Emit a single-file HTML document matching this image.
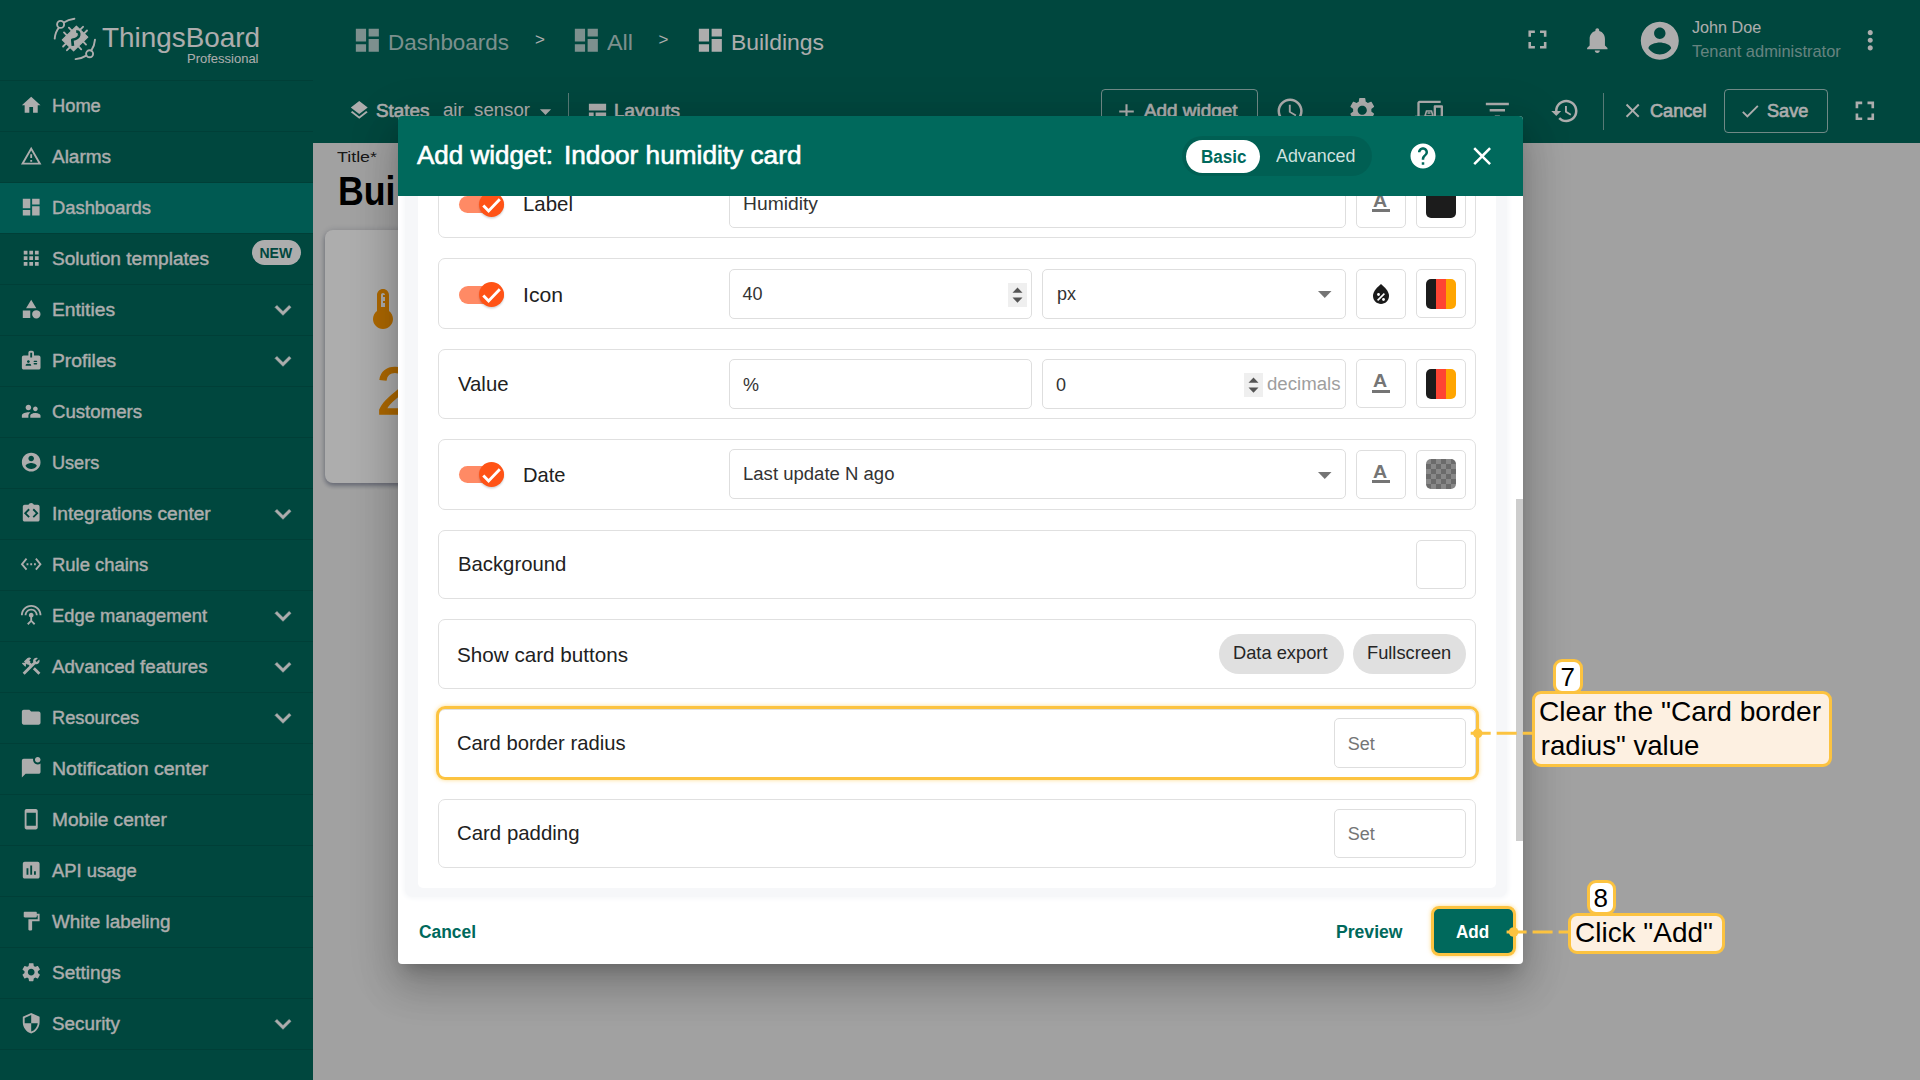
<!DOCTYPE html>
<html><head><meta charset="utf-8"><style>
*{box-sizing:border-box;margin:0;padding:0}
html,body{width:1920px;height:1080px;overflow:hidden;background:#eeeeee;font-family:"Liberation Sans",sans-serif}
.a{position:absolute}
.t{position:absolute;white-space:nowrap;line-height:1}
svg{position:absolute;display:block;overflow:visible}
.med{-webkit-text-stroke:0.35px currentColor}
.med2{-webkit-text-stroke:0.6px currentColor}
.box{position:absolute;border:1px solid #dedede;border-radius:5px;background:#fff}
.row{position:absolute;left:40px;width:1038px;border:1px solid #e0e0e0;border-radius:7px;background:#fff}
</style></head><body>
<div class="a" style="left:0;top:0;width:1920px;height:143px;background:#00695c"></div>
<div class="a" style="left:0;top:0;width:313px;height:1080px;background:#00695c"></div>
<div class="a" style="left:0;top:183px;width:313px;height:50px;background:#00857a"></div>
<div class="a" style="left:0;top:80px;width:313px;height:1px;background:rgba(0,0,0,0.10)"></div>
<svg style="left:20.00px;top:94.20px;width:22.40px;height:22.40px;" viewBox="0 0 24 24"><path fill="#fff" d="M10 20v-6h4v6h5v-8h3L12 3 2 12h3v8z"/></svg>
<div class="t med" style="left:51.90px;top:96.86px;font-size:18px;color:#fff;font-weight:400;;transform:scaleX(1.0163);transform-origin:0 0;">Home</div>
<div class="a" style="left:0;top:131px;width:313px;height:1px;background:rgba(0,0,0,0.10)"></div>
<svg style="left:20.00px;top:145.20px;width:22.40px;height:22.40px;" viewBox="0 0 24 24"><path fill="#fff" d="M12 5.99L19.53 19H4.47L12 5.99M12 2L1 21h22L12 2zm1 14h-2v2h2v-2zm0-6h-2v4h2v-4z"/></svg>
<div class="t med" style="left:51.90px;top:147.86px;font-size:18px;color:#fff;font-weight:400;;transform:scaleX(1.0533);transform-origin:0 0;">Alarms</div>
<div class="a" style="left:0;top:182px;width:313px;height:1px;background:rgba(0,0,0,0.10)"></div>
<svg style="left:20.00px;top:196.20px;width:22.40px;height:22.40px;" viewBox="0 0 24 24"><path fill="#fff" d="M3 13h8V3H3v10zm0 8h8v-6H3v6zm10 0h8V11h-8v10zm0-18v6h8V3h-8z"/></svg>
<div class="t med" style="left:51.90px;top:198.86px;font-size:18px;color:#fff;font-weight:400;;transform:scaleX(1.0200);transform-origin:0 0;">Dashboards</div>
<div class="a" style="left:0;top:233px;width:313px;height:1px;background:rgba(0,0,0,0.10)"></div>
<svg style="left:20.00px;top:247.20px;width:22.40px;height:22.40px;" viewBox="0 0 24 24"><path fill="#fff" d="M4 8h4V4H4v4zm6 12h4v-4h-4v4zm-6 0h4v-4H4v4zm0-6h4v-4H4v4zm6 0h4v-4h-4v4zm6-10v4h4V4h-4zm-6 4h4V4h-4v4zm6 6h4v-4h-4v4zm0 6h4v-4h-4v4z"/></svg>
<div class="t med" style="left:51.90px;top:249.86px;font-size:18px;color:#fff;font-weight:400;;transform:scaleX(1.0601);transform-origin:0 0;">Solution templates</div>
<div class="a" style="left:0;top:284px;width:313px;height:1px;background:rgba(0,0,0,0.10)"></div>
<svg style="left:20.00px;top:298.20px;width:22.40px;height:22.40px;" viewBox="0 0 24 24"><path fill="#fff" d="M12 2l-5.5 9h11zM17.5 13a4.5 4.5 0 1 0 0 9 4.5 4.5 0 1 0 0-9zM3 13.5h8v8H3z"/></svg>
<div class="t med" style="left:51.90px;top:300.86px;font-size:18px;color:#fff;font-weight:400;;transform:scaleX(1.0672);transform-origin:0 0;">Entities</div>
<svg style="left:266.6px;top:293.50px;width:32px;height:32px" viewBox="0 0 24 24"><path fill="#fff" stroke="#fff" stroke-width="0.45" d="M16.59 8.59L12 13.17 7.41 8.59 6 10l6 6 6-6z"/></svg>
<div class="a" style="left:0;top:335px;width:313px;height:1px;background:rgba(0,0,0,0.10)"></div>
<svg style="left:20.00px;top:349.20px;width:22.40px;height:22.40px;" viewBox="0 0 24 24"><path fill="#fff" d="M20 7h-5V4c0-1.1-.9-2-2-2h-2c-1.1 0-2 .9-2 2v3H4c-1.1 0-2 .9-2 2v11c0 1.1.9 2 2 2h16c1.1 0 2-.9 2-2V9c0-1.1-.9-2-2-2zM9 12c.83 0 1.5.67 1.5 1.5S9.83 15 9 15s-1.5-.67-1.5-1.5S8.17 12 9 12zm3 6H6v-.43c0-.6.36-1.15.92-1.39.64-.28 1.34-.43 2.08-.43s1.44.15 2.08.43c.55.24.92.78.92 1.39V18zm1-9h-2V4h2v5zm4.75 7.5h-2.5c-.41 0-.75-.34-.75-.75s.34-.75.75-.75h2.5c.41 0 .75.34.75.75s-.34.75-.75.75zm0-2.5h-2.5c-.41 0-.75-.34-.75-.75s.34-.75.75-.75h2.5c.41 0 .75.34.75.75s-.34.75-.75.75z"/></svg>
<div class="t med" style="left:51.90px;top:351.86px;font-size:18px;color:#fff;font-weight:400;;transform:scaleX(1.0703);transform-origin:0 0;">Profiles</div>
<svg style="left:266.6px;top:344.50px;width:32px;height:32px" viewBox="0 0 24 24"><path fill="#fff" stroke="#fff" stroke-width="0.45" d="M16.59 8.59L12 13.17 7.41 8.59 6 10l6 6 6-6z"/></svg>
<div class="a" style="left:0;top:386px;width:313px;height:1px;background:rgba(0,0,0,0.10)"></div>
<svg style="left:20.00px;top:400.20px;width:22.40px;height:22.40px;" viewBox="0 0 24 24"><path fill="#fff" d="M16.5 12c1.38 0 2.49-1.12 2.49-2.5S17.88 7 16.5 7C15.12 7 14 8.12 14 9.5s1.12 2.5 2.5 2.5zM9 11c1.66 0 2.99-1.34 2.99-3S10.66 5 9 5C7.34 5 6 6.34 6 8s1.34 3 3 3zm7.5 3c-1.83 0-5.5.92-5.5 2.75V19h11v-2.25c0-1.83-3.67-2.75-5.5-2.75zM9 13c-2.33 0-7 1.17-7 3.5V19h7v-2.25c0-.85.33-2.34 2.37-3.47C10.5 13.1 9.66 13 9 13z"/></svg>
<div class="t med" style="left:51.90px;top:402.86px;font-size:18px;color:#fff;font-weight:400;;transform:scaleX(1.0341);transform-origin:0 0;">Customers</div>
<div class="a" style="left:0;top:437px;width:313px;height:1px;background:rgba(0,0,0,0.10)"></div>
<svg style="left:20.00px;top:451.20px;width:22.40px;height:22.40px;" viewBox="0 0 24 24"><path fill="#fff" d="M12 2C6.48 2 2 6.48 2 12s4.48 10 10 10 10-4.48 10-10S17.52 2 12 2zm0 3c1.66 0 3 1.34 3 3s-1.34 3-3 3-3-1.34-3-3 1.34-3 3-3zm0 14.2c-2.5 0-4.71-1.28-6-3.22.03-1.99 4-3.08 6-3.08 1.99 0 5.97 1.09 6 3.08-1.29 1.94-3.5 3.22-6 3.22z"/></svg>
<div class="t med" style="left:51.90px;top:453.86px;font-size:18px;color:#fff;font-weight:400;;transform:scaleX(1.0050);transform-origin:0 0;">Users</div>
<div class="a" style="left:0;top:488px;width:313px;height:1px;background:rgba(0,0,0,0.10)"></div>
<svg style="left:20.00px;top:502.20px;width:22.40px;height:22.40px;" viewBox="0 0 24 24"><path fill="#fff" d="M19 3h-4.18C14.4 1.84 13.3 1 12 1s-2.4.84-2.82 2H5c-1.1 0-2 .9-2 2v14c0 1.1.9 2 2 2h14c1.1 0 2-.9 2-2V5c0-1.1-.9-2-2-2zM10.5 15.5L9.1 16.9 4.2 12l4.9-4.9 1.4 1.4L7 12zM14.9 16.9l-1.4-1.4L17 12l-3.5-3.5 1.4-1.4 4.9 4.9z"/></svg>
<div class="t med" style="left:51.90px;top:504.86px;font-size:18px;color:#fff;font-weight:400;;transform:scaleX(1.0648);transform-origin:0 0;">Integrations center</div>
<svg style="left:266.6px;top:497.50px;width:32px;height:32px" viewBox="0 0 24 24"><path fill="#fff" stroke="#fff" stroke-width="0.45" d="M16.59 8.59L12 13.17 7.41 8.59 6 10l6 6 6-6z"/></svg>
<div class="a" style="left:0;top:539px;width:313px;height:1px;background:rgba(0,0,0,0.10)"></div>
<svg style="left:20.00px;top:553.20px;width:22.40px;height:22.40px;" viewBox="0 0 24 24"><path fill="#fff" d="M7.77 6.76L6.23 5.48.82 12l5.41 6.52 1.54-1.28L3.42 12l4.35-5.24zM7 13h2v-2H7v2zm10-2h-2v2h2v-2zm-6 2h2v-2h-2v2zm6.77-7.52l-1.54 1.28L20.58 12l-4.35 5.24 1.54 1.28L23.18 12l-5.41-6.52z"/></svg>
<div class="t med" style="left:51.90px;top:555.86px;font-size:18px;color:#fff;font-weight:400;;transform:scaleX(1.0233);transform-origin:0 0;">Rule chains</div>
<div class="a" style="left:0;top:590px;width:313px;height:1px;background:rgba(0,0,0,0.10)"></div>
<svg style="left:20.00px;top:604.20px;width:22.40px;height:22.40px;" viewBox="0 0 24 24"><path fill="#fff" d="M12 5c-3.87 0-7 3.13-7 7h2c0-2.76 2.24-5 5-5s5 2.24 5 5h2c0-3.87-3.13-7-7-7zm1 9.29c.88-.39 1.5-1.26 1.5-2.29 0-1.38-1.12-2.5-2.5-2.5S9.5 10.62 9.5 12c0 1.02.62 1.9 1.5 2.29v3.3L7.59 21 9 22.41l3-3 3 3L16.41 21 13 17.59v-3.3zM12 1C5.93 1 1 5.93 1 12h2c0-4.97 4.03-9 9-9s9 4.03 9 9h2c0-6.07-4.93-11-11-11z"/></svg>
<div class="t med" style="left:51.90px;top:606.86px;font-size:18px;color:#fff;font-weight:400;;transform:scaleX(1.0190);transform-origin:0 0;">Edge management</div>
<svg style="left:266.6px;top:599.50px;width:32px;height:32px" viewBox="0 0 24 24"><path fill="#fff" stroke="#fff" stroke-width="0.45" d="M16.59 8.59L12 13.17 7.41 8.59 6 10l6 6 6-6z"/></svg>
<div class="a" style="left:0;top:641px;width:313px;height:1px;background:rgba(0,0,0,0.10)"></div>
<svg style="left:20.00px;top:655.20px;width:22.40px;height:22.40px;" viewBox="0 0 24 24"><path fill="#fff" d="M13.783 15.172l2.121-2.121 5.996 5.996-2.121 2.121zM17.5 10c1.93 0 3.5-1.57 3.5-3.5 0-.58-.16-1.12-.41-1.6l-2.7 2.7-1.49-1.49 2.7-2.7c-.48-.25-1.02-.41-1.6-.41C15.57 3 14 4.57 14 6.5c0 .41.08.8.21 1.16l-1.85 1.85-1.78-1.78.71-.71-1.41-1.41L12 3.49c-1.17-1.17-3.07-1.17-4.24 0L4.22 7.03l1.41 1.41H2.81l-.71.71 3.54 3.54.71-.71V9.15l1.41 1.41.71-.71 1.78 1.78-7.41 7.41 2.12 2.12L16.34 9.79c.36.13.75.21 1.16.21z"/></svg>
<div class="t med" style="left:51.90px;top:657.86px;font-size:18px;color:#fff;font-weight:400;;transform:scaleX(1.0359);transform-origin:0 0;">Advanced features</div>
<svg style="left:266.6px;top:650.50px;width:32px;height:32px" viewBox="0 0 24 24"><path fill="#fff" stroke="#fff" stroke-width="0.45" d="M16.59 8.59L12 13.17 7.41 8.59 6 10l6 6 6-6z"/></svg>
<div class="a" style="left:0;top:692px;width:313px;height:1px;background:rgba(0,0,0,0.10)"></div>
<svg style="left:20.00px;top:706.20px;width:22.40px;height:22.40px;" viewBox="0 0 24 24"><path fill="#fff" d="M10 4H4c-1.1 0-1.99.9-1.99 2L2 18c0 1.1.9 2 2 2h16c1.1 0 2-.9 2-2V8c0-1.1-.9-2-2-2h-8l-2-2z"/></svg>
<div class="t med" style="left:51.90px;top:708.86px;font-size:18px;color:#fff;font-weight:400;;transform:scaleX(1.0140);transform-origin:0 0;">Resources</div>
<svg style="left:266.6px;top:701.50px;width:32px;height:32px" viewBox="0 0 24 24"><path fill="#fff" stroke="#fff" stroke-width="0.45" d="M16.59 8.59L12 13.17 7.41 8.59 6 10l6 6 6-6z"/></svg>
<div class="a" style="left:0;top:743px;width:313px;height:1px;background:rgba(0,0,0,0.10)"></div>
<svg style="left:20.00px;top:757.20px;width:22.40px;height:22.40px;" viewBox="0 0 24 24"><path fill="#fff" d="M22 6.98V16c0 1.1-.9 2-2 2H6l-4 4V4c0-1.1.9-2 2-2h10.1c-.06.32-.1.66-.1 1 0 2.76 2.24 5 5 5 1.13 0 2.16-.39 3-1.02zM16 3c0 1.66 1.34 3 3 3s3-1.34 3-3-1.34-3-3-3-3 1.34-3 3z"/></svg>
<div class="t med" style="left:51.90px;top:759.86px;font-size:18px;color:#fff;font-weight:400;;transform:scaleX(1.0845);transform-origin:0 0;">Notification center</div>
<div class="a" style="left:0;top:794px;width:313px;height:1px;background:rgba(0,0,0,0.10)"></div>
<svg style="left:20.00px;top:808.20px;width:22.40px;height:22.40px;" viewBox="0 0 24 24"><path fill="#fff" d="M17 1.01L7 1c-1.1 0-2 .9-2 2v18c0 1.1.9 2 2 2h10c1.1 0 2-.9 2-2V3c0-1.1-.9-1.99-2-1.99zM17 19H7V5h10v14z"/></svg>
<div class="t med" style="left:51.90px;top:810.86px;font-size:18px;color:#fff;font-weight:400;;transform:scaleX(1.0619);transform-origin:0 0;">Mobile center</div>
<div class="a" style="left:0;top:845px;width:313px;height:1px;background:rgba(0,0,0,0.10)"></div>
<svg style="left:20.00px;top:859.20px;width:22.40px;height:22.40px;" viewBox="0 0 24 24"><path fill="#fff" d="M19 3H5c-1.1 0-2 .9-2 2v14c0 1.1.9 2 2 2h14c1.1 0 2-.9 2-2V5c0-1.1-.9-2-2-2zM9 17H7v-7h2v7zm4 0h-2V7h2v10zm4 0h-2v-4h2v4z"/></svg>
<div class="t med" style="left:51.90px;top:861.86px;font-size:18px;color:#fff;font-weight:400;;transform:scaleX(1.0203);transform-origin:0 0;">API usage</div>
<div class="a" style="left:0;top:896px;width:313px;height:1px;background:rgba(0,0,0,0.10)"></div>
<svg style="left:20.00px;top:910.20px;width:22.40px;height:22.40px;" viewBox="0 0 24 24"><path fill="#fff" d="M18 4V3c0-.55-.45-1-1-1H5c-.55 0-1 .45-1 1v4c0 .55.45 1 1 1h12c.55 0 1-.45 1-1V6h1v4H9v11c0 .55.45 1 1 1h2c.55 0 1-.45 1-1v-9h8V4h-3z"/></svg>
<div class="t med" style="left:51.90px;top:912.86px;font-size:18px;color:#fff;font-weight:400;;transform:scaleX(1.0481);transform-origin:0 0;">White labeling</div>
<div class="a" style="left:0;top:947px;width:313px;height:1px;background:rgba(0,0,0,0.10)"></div>
<svg style="left:20.00px;top:961.20px;width:22.40px;height:22.40px;" viewBox="0 0 24 24"><path fill="#fff" d="M19.14 12.94c.04-.3.06-.61.06-.94 0-.32-.02-.64-.07-.94l2.03-1.58c.18-.14.23-.41.12-.61l-1.92-3.32c-.12-.22-.37-.29-.59-.22l-2.39.96c-.5-.38-1.03-.7-1.62-.94l-.36-2.54c-.04-.24-.24-.41-.48-.41h-3.84c-.24 0-.43.17-.47.41l-.36 2.54c-.59.24-1.13.57-1.62.94l-2.39-.96c-.22-.08-.47 0-.59.22L2.74 8.87c-.12.21-.08.47.12.61l2.03 1.58c-.05.3-.09.63-.09.94s.02.64.07.94l-2.03 1.58c-.18.14-.23.41-.12.61l1.92 3.32c.12.22.37.29.59.22l2.39-.96c.5.38 1.03.7 1.62.94l.36 2.54c.05.24.24.41.48.41h3.84c.24 0 .44-.17.47-.41l.36-2.54c.59-.24 1.13-.56 1.62-.94l2.39.96c.22.08.47 0 .59-.22l1.92-3.32c.12-.22.07-.47-.12-.61l-2.01-1.58zM12 15.6c-1.98 0-3.6-1.62-3.6-3.6s1.62-3.6 3.6-3.6 3.6 1.62 3.6 3.6-1.62 3.6-3.6 3.6z"/></svg>
<div class="t med" style="left:51.90px;top:963.86px;font-size:18px;color:#fff;font-weight:400;;transform:scaleX(1.0569);transform-origin:0 0;">Settings</div>
<div class="a" style="left:0;top:998px;width:313px;height:1px;background:rgba(0,0,0,0.10)"></div>
<svg style="left:20.00px;top:1012.20px;width:22.40px;height:22.40px;" viewBox="0 0 24 24"><path fill="#fff" d="M12 1L3 5v6c0 5.55 3.84 10.74 9 12 5.16-1.26 9-6.45 9-12V5l-9-4zm0 10.99h7c-.53 4.12-3.28 7.79-7 8.94V12H5V6.3l7-3.11v8.8z"/></svg>
<div class="t med" style="left:51.90px;top:1014.86px;font-size:18px;color:#fff;font-weight:400;;transform:scaleX(1.0457);transform-origin:0 0;">Security</div>
<svg style="left:266.6px;top:1007.50px;width:32px;height:32px" viewBox="0 0 24 24"><path fill="#fff" stroke="#fff" stroke-width="0.45" d="M16.59 8.59L12 13.17 7.41 8.59 6 10l6 6 6-6z"/></svg>
<div class="a" style="left:0;top:1049px;width:313px;height:1px;background:rgba(0,0,0,0.10)"></div>
<div class="a" style="left:251.5px;top:239.5px;width:49px;height:25px;border-radius:13px;background:#fff"></div>
<div class="t " style="left:259.50px;top:245.65px;font-size:14px;color:#00695c;font-weight:700;letter-spacing:0px;">NEW</div>
<svg style="left:50px;top:14px;width:50px;height:50px" viewBox="50 14 50 50">
<polygon points="62.3,39.9 76.4,26.2 87.8,37.1 73.6,50.8" fill="#fff" stroke="#fff" stroke-width="1.2" stroke-linejoin="round"/>
<g stroke="#fff" stroke-width="1.9" stroke-linecap="round">
<path d="M66.8 35.3L64 32.4M71.7 30.6L68.9 27.7M80.2 29.7L83 26.8M84.2 33.4L87 30.5M83.2 41.7L86 44.6M78.4 46.4L81.2 49.3M69.8 47.3L67 50.2M65.9 43.6L63.1 46.5"/>
</g>
<path d="M76.2 31.6 Q79.8 31.2 79.1 35.2 Q78.4 38.6 72.3 39.8 L72.9 45.8" fill="none" stroke="#00695c" stroke-width="2.7" stroke-linejoin="round"/>
<g fill="none" stroke="#fff" stroke-width="1.9" stroke-linecap="round">
<circle cx="60.6" cy="24.4" r="3.5"/><circle cx="89.6" cy="53.8" r="3.5"/>
<path d="M63.9 22.6 Q68 19.6 74.4 18.7"/><path d="M58.9 27.7 Q55.3 32 54.7 38.6"/>
<path d="M91.3 50.5 Q94.6 45.5 95 39.6"/><path d="M86.3 55.6 Q82 58.4 75.6 59.1"/>
</g>
</svg>
<div class="t " style="left:101.50px;top:23.80px;font-size:28px;color:#fff;font-weight:400;;transform:scaleX(0.9952);transform-origin:0 0;">ThingsBoard</div>
<div class="t " style="left:186.80px;top:52.00px;font-size:13px;color:#fff;font-weight:400;;transform:scaleX(0.9993);transform-origin:0 0;">Professional</div>
<svg style="left:352.20px;top:25.20px;width:30.70px;height:30.70px;" viewBox="0 0 24 24"><path fill="rgba(255,255,255,0.72)" d="M3 13h8V3H3v10zm0 8h8v-6H3v6zm10 0h8V11h-8v10zm0-18v6h8V3h-8z"/></svg>
<div class="t " style="left:388.00px;top:32.18px;font-size:22px;color:rgba(255,255,255,0.72);font-weight:400;;transform:scaleX(1.0199);transform-origin:0 0;">Dashboards</div>
<div class="t " style="left:535.00px;top:30.61px;font-size:17px;color:#fff;font-weight:400;;">&gt;</div>
<svg style="left:571.20px;top:25.20px;width:30.70px;height:30.70px;" viewBox="0 0 24 24"><path fill="rgba(255,255,255,0.72)" d="M3 13h8V3H3v10zm0 8h8v-6H3v6zm10 0h8V11h-8v10zm0-18v6h8V3h-8z"/></svg>
<div class="t " style="left:606.50px;top:32.18px;font-size:22px;color:rgba(255,255,255,0.72);font-weight:400;;transform:scaleX(1.0633);transform-origin:0 0;">All</div>
<div class="t " style="left:658.50px;top:30.61px;font-size:17px;color:#fff;font-weight:400;;">&gt;</div>
<svg style="left:695.00px;top:25.20px;width:30.70px;height:30.70px;" viewBox="0 0 24 24"><path fill="#fff" d="M3 13h8V3H3v10zm0 8h8v-6H3v6zm10 0h8V11h-8v10zm0-18v6h8V3h-8z"/></svg>
<div class="t " style="left:730.50px;top:32.18px;font-size:22px;color:#fff;font-weight:400;;transform:scaleX(1.0417);transform-origin:0 0;">Buildings</div>
<svg style="left:1521.80px;top:24.40px;width:30.90px;height:30.90px;" viewBox="0 0 24 24"><path fill="#fff" d="M7 14H5v5h5v-2H7v-3zm-2-4h2V7h3V5H5v5zm12 7h-3v2h5v-5h-2v3zM14 5v2h3v3h2V5h-5z"/></svg>
<svg style="left:1581.90px;top:24.50px;width:30.60px;height:30.60px;" viewBox="0 0 24 24"><path fill="#fff" d="M12 22c1.1 0 2-.9 2-2h-4c0 1.1.89 2 2 2zm6-6v-5c0-3.07-1.64-5.64-4.5-6.32V4c0-.83-.67-1.5-1.5-1.5s-1.5.67-1.5 1.5v.68C7.63 5.36 6 7.92 6 11v5l-2 2v1h16v-1l-2-2z"/></svg>
<svg style="left:1636.90px;top:17.70px;width:45.60px;height:45.60px;" viewBox="0 0 24 24"><path fill="#fff" d="M12 2C6.48 2 2 6.48 2 12s4.48 10 10 10 10-4.48 10-10S17.52 2 12 2zm0 3c1.66 0 3 1.34 3 3s-1.34 3-3 3-3-1.34-3-3 1.34-3 3-3zm0 14.2c-2.5 0-4.71-1.28-6-3.22.03-1.99 4-3.08 6-3.08 1.99 0 5.97 1.09 6 3.08-1.29 1.94-3.5 3.22-6 3.22z"/></svg>
<div class="t " style="left:1691.50px;top:18.93px;font-size:16.5px;color:#fff;font-weight:400;;transform:scaleX(0.9796);transform-origin:0 0;">John Doe</div>
<div class="t " style="left:1691.50px;top:43.29px;font-size:16.2px;color:rgba(255,255,255,0.6);font-weight:400;;transform:scaleX(1.0145);transform-origin:0 0;">Tenant administrator</div>
<svg style="left:1855.00px;top:24.80px;width:30.50px;height:30.50px;" viewBox="0 0 24 24"><path fill="#fff" d="M12 8c1.1 0 2-.9 2-2s-.9-2-2-2-2 .9-2 2 .9 2 2 2zm0 2c-1.1 0-2 .9-2 2s.9 2 2 2 2-.9 2-2-.9-2-2-2zm0 6c-1.1 0-2 .9-2 2s.9 2 2 2 2-.9 2-2-.9-2-2-2z"/></svg>
<svg style="left:347.50px;top:99.00px;width:22.50px;height:22.50px;" viewBox="0 0 24 24"><path fill="#fff" d="M11.99 18.54l-7.37-5.73L3 14.07l9 7 9-7-1.63-1.27-7.38 5.74zM12 16l7.36-5.73L21 9l-9-7-9 7 1.63 1.27L12 16z"/></svg>
<div class="t med2" style="left:375.50px;top:101.76px;font-size:18px;color:#fff;font-weight:400;;transform:scaleX(1.0445);transform-origin:0 0;">States</div>
<div class="t " style="left:443.00px;top:101.36px;font-size:18px;color:#fff;font-weight:400;;transform:scaleX(1.0351);transform-origin:0 0;">air_sensor</div>
<svg style="left:531.80px;top:97.60px;width:27.00px;height:27.00px;" viewBox="0 0 24 24"><path fill="#fff" d="M7 10l5 5 5-5z"/></svg>
<div class="a" style="left:568px;top:93px;width:1px;height:37px;background:rgba(255,255,255,0.5)"></div>
<svg style="left:586.00px;top:100.00px;width:23.00px;height:23.00px;" viewBox="0 0 24 24"><path fill="#fff" d="M3 4h18v7H3zM3 13h5v7H3zM10 13h11v7H10z"/></svg>
<div class="t med2" style="left:614.00px;top:101.96px;font-size:18px;color:#fff;font-weight:400;;transform:scaleX(1.0437);transform-origin:0 0;">Layouts</div>
<div class="a" style="left:1101px;top:89px;width:157px;height:44px;border:1px solid rgba(255,255,255,0.65);border-radius:4px"></div>
<svg style="left:1113.80px;top:98.50px;width:25.00px;height:25.00px;" viewBox="0 0 24 24"><path fill="#fff" d="M19 13h-6v6h-2v-6H5v-2h6V5h2v6h6v2z"/></svg>
<div class="t med2" style="left:1144.00px;top:101.76px;font-size:18px;color:#fff;font-weight:400;;transform:scaleX(1.0498);transform-origin:0 0;">Add widget</div>
<svg style="left:1274.90px;top:95.80px;width:30.20px;height:30.20px;" viewBox="0 0 24 24"><path fill="#fff" d="M11.99 2C6.47 2 2 6.48 2 12s4.47 10 9.99 10C17.52 22 22 17.52 22 12S17.52 2 11.99 2zM12 20c-4.42 0-8-3.58-8-8s3.58-8 8-8 8 3.58 8 8-3.58 8-8 8zm.5-13H11v6l5.25 3.15.75-1.23-4.5-2.67z"/></svg>
<svg style="left:1346.50px;top:95.10px;width:30.50px;height:30.50px;" viewBox="0 0 24 24"><path fill="#fff" d="M19.14 12.94c.04-.3.06-.61.06-.94 0-.32-.02-.64-.07-.94l2.03-1.58c.18-.14.23-.41.12-.61l-1.92-3.32c-.12-.22-.37-.29-.59-.22l-2.39.96c-.5-.38-1.03-.7-1.62-.94l-.36-2.54c-.04-.24-.24-.41-.48-.41h-3.84c-.24 0-.43.17-.47.41l-.36 2.54c-.59.24-1.13.57-1.62.94l-2.39-.96c-.22-.08-.47 0-.59.22L2.74 8.87c-.12.21-.08.47.12.61l2.03 1.58c-.05.3-.09.63-.09.94s.02.64.07.94l-2.03 1.58c-.18.14-.23.41-.12.61l1.92 3.32c.12.22.37.29.59.22l2.39-.96c.5.38 1.03.7 1.62.94l.36 2.54c.05.24.24.41.48.41h3.84c.24 0 .44-.17.47-.41l.36-2.54c.59-.24 1.13-.56 1.62-.94l2.39.96c.22.08.47 0 .59-.22l1.92-3.32c.12-.22.07-.47-.12-.61l-2.01-1.58zM12 15.6c-1.98 0-3.6-1.62-3.6-3.6s1.62-3.6 3.6-3.6 3.6 1.62 3.6 3.6-1.62 3.6-3.6 3.6z"/></svg>
<svg style="left:1414.50px;top:96.30px;width:28.00px;height:28.00px;" viewBox="0 0 24 24"><path fill="#fff" d="M4 6h18V4H4c-1.1 0-2 .9-2 2v11H0v3h14v-3H4V6zm19 2h-6c-.55 0-1 .45-1 1v10c0 .55.45 1 1 1h6c.55 0 1-.45 1-1V9c0-.55-.45-1-1-1zm-1 9h-4v-7h4v7z"/></svg>
<svg style="left:1424px;top:110px;width:10px;height:8px" viewBox="0 0 10 8"><path d="M2.5 1h5l1.5 5H1z M3.5 3h3" fill="none" stroke="#fff" stroke-width="1.6"/></svg>
<svg style="left:1482.20px;top:95.30px;width:30.70px;height:30.70px;" viewBox="0 0 24 24"><path fill="#fff" d="M10 18h4v-2h-4v2zM3 6v2h18V6H3zm3 7h12v-2H6v2z"/></svg>
<svg style="left:1550.20px;top:95.75px;width:30.00px;height:30.00px;" viewBox="0 0 24 24"><path fill="#fff" d="M13 3c-4.97 0-9 4.03-9 9H1l3.89 3.89.07.14L9 12H6c0-3.87 3.13-7 7-7s7 3.13 7 7-3.13 7-7 7c-1.93 0-3.68-.79-4.94-2.06l-1.42 1.42C8.27 19.99 10.51 21 13 21c4.97 0 9-4.03 9-9s-4.03-9-9-9zm-1 5v5l4.28 2.54.72-1.21-3.5-2.08V8H12z"/></svg>
<div class="a" style="left:1603px;top:93px;width:1px;height:37px;background:rgba(255,255,255,0.5)"></div>
<svg style="left:1620.50px;top:99.20px;width:23.30px;height:23.30px;" viewBox="0 0 24 24"><path fill="#fff" d="M19 6.41L17.59 5 12 10.59 6.41 5 5 6.41 10.59 12 5 17.59 6.41 19 12 13.41 17.59 19 19 17.59 13.41 12z"/></svg>
<div class="t med2" style="left:1649.50px;top:101.76px;font-size:18px;color:#fff;font-weight:400;;transform:scaleX(1.0084);transform-origin:0 0;">Cancel</div>
<div class="a" style="left:1724px;top:89px;width:104px;height:44px;border:1px solid rgba(255,255,255,0.65);border-radius:4px"></div>
<svg style="left:1738.50px;top:100.00px;width:22.30px;height:22.30px;" viewBox="0 0 24 24"><path fill="#fff" d="M9 16.17L4.83 12l-1.42 1.41L9 19 21 7l-1.41-1.41z"/></svg>
<div class="t med2" style="left:1767.00px;top:101.76px;font-size:18px;color:#fff;font-weight:400;;transform:scaleX(1.0065);transform-origin:0 0;">Save</div>
<svg style="left:1848.90px;top:95.10px;width:31.70px;height:31.70px;" viewBox="0 0 24 24"><path fill="#fff" d="M7 14H5v5h5v-2H7v-3zm-2-4h2V7h3V5H5v5zm12 7h-3v2h5v-5h-2v3zM14 5v2h3v3h2V5h-5z"/></svg>
<div class="t " style="left:337.20px;top:148.78px;font-size:15.5px;color:rgba(0,0,0,0.87);font-weight:400;;transform:scaleX(1.1511);transform-origin:0 0;">Title*</div>
<div class="t " style="left:337.50px;top:170.94px;font-size:40px;color:#000;font-weight:700;;transform:scaleX(0.8923);transform-origin:0 0;">Bui</div>
<div class="a" style="left:325px;top:230px;width:300px;height:253px;background:#fff;border-radius:8px;box-shadow:0 3px 4px rgba(20,30,70,0.32),0 0 7px rgba(20,30,70,0.16)"></div>
<svg style="left:358.50px;top:285.00px;width:48.00px;height:48.00px;" viewBox="0 0 24 24"><path fill="#ff9a00" d="M15 13V5c0-1.66-1.34-3-3-3S9 3.34 9 5v8c-1.21.91-2 2.37-2 4 0 2.76 2.24 5 5 5s5-2.24 5-5c0-1.63-.79-3.09-2-4zm-4-8c0-.55.45-1 1-1s1 .45 1 1h-1v1h1v2h-1v1h1v2h-2V5z"/></svg>
<div class="t " style="left:376.50px;top:358.13px;font-size:66px;color:#ff9a00;font-weight:400;-webkit-text-stroke:1.3px #ff9a00;">23</div>
<div class="a" style="left:0;top:0;width:1920px;height:1080px;background:rgba(0,0,0,0.32)"></div>
<div class="a" id="modal" style="left:398px;top:116px;width:1125px;height:848px;background:#fff;border-radius:4px;overflow:hidden;box-shadow:0 11px 15px -7px rgba(0,0,0,.2),0 24px 38px 3px rgba(0,0,0,.14),0 9px 46px 8px rgba(0,0,0,.12)">
<div class="a" style="left:7.00px;top:34.00px;width:1102.00px;height:747.00px;background:#f6f7f9;border-radius:8px;box-shadow:0 0 4px 1.5px #f7f8fa"></div>
<div class="a" style="left:20.00px;top:80.00px;width:1078.00px;height:692.00px;background:#fff;border-radius:0 0 5px 5px"></div>
<div class="a" style="left:1118.00px;top:383.00px;width:6.50px;height:342.00px;background:#cdcdcd"></div>
<div class="a" style="left:40.00px;top:51.00px;width:1038.00px;height:71.00px;border:1px solid #e0e0e0;border-radius:7px;background:#fff"></div>
<div class="a" style="left:61.00px;top:79.55px;width:45.00px;height:17.50px;border-radius:9px;background:#ff8a65"></div>
<div class="a" style="left:81.00px;top:75.70px;width:25.20px;height:25.20px;border-radius:50%;background:#ff5316;box-shadow:0 1.5px 2px rgba(0,0,0,0.18)"></div>
<svg style="left:81px;top:75.70000000000002px;width:25px;height:25px" viewBox="0 0 25 25"><path d="M4.3 13.4L9.6 18.9L20.8 7.3" fill="none" stroke="#fff" stroke-width="2.9"/></svg>
<div class="t " style="left:124.90px;top:77.02px;font-size:21px;color:#212121;font-weight:400;;transform:scaleX(0.9729);transform-origin:0 0;">Label</div>
<div class="a" style="left:331.00px;top:62.00px;width:617.00px;height:50.00px;border:1px solid #dedede;border-radius:5px;background:#fff;"></div>
<div class="t " style="left:345.00px;top:78.66px;font-size:18px;color:#333;font-weight:400;;transform:scaleX(1.0712);transform-origin:0 0;">Humidity</div>
<div class="a" style="left:958.00px;top:62.50px;width:49.50px;height:49.00px;border:1px solid #dedede;border-radius:5px;background:#fff;"></div>
<div class="t " style="left:975.20px;top:74.52px;font-size:19px;color:#757575;font-weight:700;;transform:scaleX(1.0339);transform-origin:0 0;">A</div>
<div class="a" style="left:974.00px;top:93.30px;width:17.60px;height:2.60px;background:#757575"></div>
<div class="a" style="left:1018.00px;top:62.50px;width:50.00px;height:49.00px;border:1px solid #dedede;border-radius:5px;background:#fff;"></div>
<div class="a" style="left:1028.00px;top:72.00px;width:30.20px;height:30.20px;border-radius:5px;background:#1c1c1c"></div>
<div class="a" style="left:40.00px;top:142.00px;width:1038.00px;height:71.00px;border:1px solid #e0e0e0;border-radius:7px;background:#fff"></div>
<div class="a" style="left:61.00px;top:170.05px;width:45.00px;height:17.50px;border-radius:9px;background:#ff8a65"></div>
<div class="a" style="left:81.00px;top:166.20px;width:25.20px;height:25.20px;border-radius:50%;background:#ff5316;box-shadow:0 1.5px 2px rgba(0,0,0,0.18)"></div>
<svg style="left:81px;top:166.2px;width:25px;height:25px" viewBox="0 0 25 25"><path d="M4.3 13.4L9.6 18.9L20.8 7.3" fill="none" stroke="#fff" stroke-width="2.9"/></svg>
<div class="t " style="left:124.60px;top:168.02px;font-size:21px;color:#212121;font-weight:400;;transform:scaleX(1.0075);transform-origin:0 0;">Icon</div>
<div class="a" style="left:331.00px;top:153.00px;width:303.00px;height:49.50px;border:1px solid #dedede;border-radius:5px;background:#fff;"></div>
<div class="t " style="left:344.50px;top:169.46px;font-size:18px;color:#333;font-weight:400;;">40</div>
<div class="a" style="left:610.00px;top:167.30px;width:19.00px;height:23.40px;background:#efefef"></div>
<svg style="left:610px;top:167.3px;width:19px;height:23.4px" viewBox="0 0 19 23.4"><path d="M4.5 9.8 L9.5 4.5 L14.5 9.8z M4.5 14.5 L9.5 19.8 L14.5 14.5z" fill="#555"/></svg>
<div class="a" style="left:644.00px;top:152.50px;width:304.00px;height:50.00px;border:1px solid #dedede;border-radius:5px;background:#fff;"></div>
<div class="t " style="left:659.00px;top:169.46px;font-size:18px;color:#333;font-weight:400;;">px</div>
<svg style="left:920.3px;top:174.7px;width:13.5px;height:7px" viewBox="0 0 13.5 7"><path d="M0 0h13.5L6.75 7z" fill="#757575"/></svg>
<div class="a" style="left:958.00px;top:153.00px;width:49.50px;height:49.50px;border:1px solid #dedede;border-radius:5px;background:#fff;"></div>
<svg style="left:971.30px;top:165.50px;width:24.00px;height:24.00px;" viewBox="0 0 24 24"><path fill="#1a1a1a" d="M12 2c-5.33 4.55-8 8.48-8 11.8 0 4.98 3.8 8.2 8 8.2s8-3.22 8-8.2C20 10.48 17.33 6.55 12 2z"/></svg>
<svg style="left:971.3px;top:165.5px;width:24px;height:24px" viewBox="0 0 24 24"><circle cx="9.5" cy="12.5" r="1.4" fill="#fff"/><circle cx="14.5" cy="17.5" r="1.4" fill="#fff"/><path d="M8.6 18.4l6.8-6.8" stroke="#fff" stroke-width="1.6"/></svg>
<div class="a" style="left:1018.00px;top:153.00px;width:50.00px;height:49.00px;border:1px solid #dedede;border-radius:5px;background:#fff;"></div>
<div class="a" style="left:1028.00px;top:162.50px;width:30.20px;height:30.20px;border-radius:5px;background:linear-gradient(90deg,#1c1c1c 0 33.3%,#ff4433 33.3% 66.6%,#ffa500 66.6%)"></div>
<div class="a" style="left:40.00px;top:233.00px;width:1038.00px;height:70.00px;border:1px solid #e0e0e0;border-radius:7px;background:#fff"></div>
<div class="t " style="left:60.30px;top:257.02px;font-size:21px;color:#212121;font-weight:400;;transform:scaleX(0.9682);transform-origin:0 0;">Value</div>
<div class="a" style="left:331.00px;top:243.00px;width:303.00px;height:49.50px;border:1px solid #dedede;border-radius:5px;background:#fff;"></div>
<div class="t " style="left:345.00px;top:259.76px;font-size:18px;color:#333;font-weight:400;;">%</div>
<div class="a" style="left:644.00px;top:243.00px;width:304.00px;height:49.50px;border:1px solid #dedede;border-radius:5px;background:#fff;"></div>
<div class="t " style="left:658.00px;top:259.76px;font-size:18px;color:#333;font-weight:400;;">0</div>
<div class="a" style="left:846.00px;top:257.30px;width:19.00px;height:23.40px;background:#efefef"></div>
<svg style="left:846px;top:257.3px;width:19px;height:23.4px" viewBox="0 0 19 23.4"><path d="M4.5 9.8 L9.5 4.5 L14.5 9.8z M4.5 14.5 L9.5 19.8 L14.5 14.5z" fill="#555"/></svg>
<div class="t " style="left:869.00px;top:259.26px;font-size:18px;color:#9e9e9e;font-weight:400;;transform:scaleX(1.0348);transform-origin:0 0;">decimals</div>
<div class="a" style="left:958.00px;top:243.30px;width:49.50px;height:49.00px;border:1px solid #dedede;border-radius:5px;background:#fff;"></div>
<div class="t " style="left:975.20px;top:255.32px;font-size:19px;color:#757575;font-weight:700;;transform:scaleX(1.0339);transform-origin:0 0;">A</div>
<div class="a" style="left:974.00px;top:274.10px;width:17.60px;height:2.60px;background:#757575"></div>
<div class="a" style="left:1018.00px;top:243.30px;width:50.00px;height:49.00px;border:1px solid #dedede;border-radius:5px;background:#fff;"></div>
<div class="a" style="left:1028.00px;top:252.80px;width:30.20px;height:30.20px;border-radius:5px;background:linear-gradient(90deg,#1c1c1c 0 33.3%,#ff4433 33.3% 66.6%,#ffa500 66.6%)"></div>
<div class="a" style="left:40.00px;top:323.00px;width:1038.00px;height:71.00px;border:1px solid #e0e0e0;border-radius:7px;background:#fff"></div>
<div class="a" style="left:61.00px;top:349.95px;width:45.00px;height:17.50px;border-radius:9px;background:#ff8a65"></div>
<div class="a" style="left:81.00px;top:346.10px;width:25.20px;height:25.20px;border-radius:50%;background:#ff5316;box-shadow:0 1.5px 2px rgba(0,0,0,0.18)"></div>
<svg style="left:81px;top:346.09999999999997px;width:25px;height:25px" viewBox="0 0 25 25"><path d="M4.3 13.4L9.6 18.9L20.8 7.3" fill="none" stroke="#fff" stroke-width="2.9"/></svg>
<div class="t " style="left:125.00px;top:348.22px;font-size:21px;color:#212121;font-weight:400;;transform:scaleX(0.9581);transform-origin:0 0;">Date</div>
<div class="a" style="left:331.00px;top:333.00px;width:617.00px;height:50.00px;border:1px solid #dedede;border-radius:5px;background:#fff;"></div>
<div class="t " style="left:344.80px;top:348.76px;font-size:18px;color:#333;font-weight:400;;transform:scaleX(1.0297);transform-origin:0 0;">Last update N ago</div>
<svg style="left:920.3px;top:355.5px;width:13.5px;height:7px" viewBox="0 0 13.5 7"><path d="M0 0h13.5L6.75 7z" fill="#757575"/></svg>
<div class="a" style="left:958.00px;top:333.50px;width:49.50px;height:49.00px;border:1px solid #dedede;border-radius:5px;background:#fff;"></div>
<div class="t " style="left:975.20px;top:345.52px;font-size:19px;color:#757575;font-weight:700;;transform:scaleX(1.0339);transform-origin:0 0;">A</div>
<div class="a" style="left:974.00px;top:364.30px;width:17.60px;height:2.60px;background:#757575"></div>
<div class="a" style="left:1018.00px;top:333.50px;width:50.00px;height:49.00px;border:1px solid #dedede;border-radius:5px;background:#fff;"></div>
<div class="a" style="left:1028.00px;top:343.00px;width:30.20px;height:30.20px;border-radius:5px;background-color:#888;background-image:linear-gradient(45deg,#6b6b6b 25%,transparent 25%,transparent 75%,#6b6b6b 75%),linear-gradient(45deg,#6b6b6b 25%,transparent 25%,transparent 75%,#6b6b6b 75%);background-size:10px 10px;background-position:0 0,5px 5px"></div>
<div class="a" style="left:40.00px;top:414.00px;width:1038.00px;height:69.00px;border:1px solid #e0e0e0;border-radius:7px;background:#fff"></div>
<div class="t " style="left:59.80px;top:437.02px;font-size:21px;color:#212121;font-weight:400;;transform:scaleX(0.9663);transform-origin:0 0;">Background</div>
<div class="a" style="left:1018.00px;top:423.50px;width:50.00px;height:49.50px;border:1px solid #dedede;border-radius:5px;background:#fff;"></div>
<div class="a" style="left:40.00px;top:503.00px;width:1038.00px;height:70.00px;border:1px solid #e0e0e0;border-radius:7px;background:#fff"></div>
<div class="t " style="left:59.20px;top:527.72px;font-size:21px;color:#212121;font-weight:400;;transform:scaleX(0.9831);transform-origin:0 0;">Show card buttons</div>
<div class="a" style="left:821.00px;top:518.00px;width:124.50px;height:40.00px;border-radius:20px;background:#e0e0e0"></div>
<div class="t " style="left:835.20px;top:527.89px;font-size:18.2px;color:#262626;font-weight:400;;transform:scaleX(1.0050);transform-origin:0 0;">Data export</div>
<div class="a" style="left:955.00px;top:518.00px;width:113.00px;height:40.00px;border-radius:20px;background:#e0e0e0"></div>
<div class="t " style="left:969.00px;top:527.89px;font-size:18.2px;color:#262626;font-weight:400;;transform:scaleX(1.0035);transform-origin:0 0;">Fullscreen</div>
<div class="a" style="left:40.00px;top:593.00px;width:1038.00px;height:70.00px;border:1px solid #e0e0e0;border-radius:7px;background:#fff"></div>
<div class="t " style="left:59.20px;top:616.02px;font-size:21px;color:#212121;font-weight:400;;transform:scaleX(0.9623);transform-origin:0 0;">Card border radius</div>
<div class="a" style="left:935.50px;top:602.30px;width:132.50px;height:49.50px;border:1px solid #dedede;border-radius:5px;background:#fff;"></div>
<div class="t " style="left:949.80px;top:619.36px;font-size:18px;color:#757575;font-weight:400;;">Set</div>
<div class="a" style="left:40.00px;top:682.50px;width:1038.00px;height:69.00px;border:1px solid #e0e0e0;border-radius:7px;background:#fff"></div>
<div class="t " style="left:59.20px;top:706.32px;font-size:21px;color:#212121;font-weight:400;;transform:scaleX(0.9715);transform-origin:0 0;">Card padding</div>
<div class="a" style="left:935.50px;top:692.50px;width:132.50px;height:49.00px;border:1px solid #dedede;border-radius:5px;background:#fff;"></div>
<div class="t " style="left:949.80px;top:709.26px;font-size:18px;color:#757575;font-weight:400;;">Set</div>
<div class="t " style="left:20.80px;top:806.96px;font-size:18px;color:#00695c;font-weight:700;;transform:scaleX(0.9656);transform-origin:0 0;">Cancel</div>
<div class="t " style="left:938.00px;top:807.06px;font-size:18px;color:#00695c;font-weight:700;;transform:scaleX(0.9773);transform-origin:0 0;">Preview</div>
<div class="a" style="left:1035.00px;top:793.00px;width:79.50px;height:44.00px;border-radius:4px;background:#00695c"></div>
<div class="t " style="left:1057.50px;top:807.06px;font-size:18px;color:#fff;font-weight:700;;transform:scaleX(0.9514);transform-origin:0 0;">Add</div>
<div class="a" style="left:0;top:0;width:1125px;height:80px;background:#00695c"></div>
<div class="t med2" style="left:19.00px;top:25.99px;font-size:26px;color:#fff;font-weight:400;;transform:scaleX(1.0009);transform-origin:0 0;">Add widget:</div>
<div class="t med2" style="left:165.50px;top:25.99px;font-size:26px;color:#fff;font-weight:400;;transform:scaleX(1.0082);transform-origin:0 0;">Indoor humidity card</div>
<div class="a" style="left:784.00px;top:20.00px;width:190.00px;height:40.00px;border-radius:20px;background:rgba(0,0,0,0.09)"></div>
<div class="a" style="left:788.00px;top:24.00px;width:74.00px;height:33.00px;border-radius:17px;background:#fff"></div>
<div class="t " style="left:802.50px;top:32.16px;font-size:18px;color:#00695c;font-weight:700;;transform:scaleX(0.9470);transform-origin:0 0;">Basic</div>
<div class="t " style="left:878.00px;top:31.89px;font-size:17.5px;color:rgba(255,255,255,0.82);font-weight:400;;transform:scaleX(1.0213);transform-origin:0 0;">Advanced</div>
<svg style="left:1009.50px;top:25.00px;width:30.00px;height:30.00px;" viewBox="0 0 24 24"><path fill="#fff" d="M12 2C6.48 2 2 6.48 2 12s4.48 10 10 10 10-4.48 10-10S17.52 2 12 2zm1 17h-2v-2h2v2zm2.07-7.75l-.9.92C13.45 12.9 13 13.5 13 15h-2v-.5c0-1.1.45-2.1 1.17-2.83l1.24-1.26c.37-.36.59-.86.59-1.41 0-1.1-.9-2-2-2s-2 .9-2 2H8c0-2.21 1.79-4 4-4s4 1.79 4 4c0 .88-.36 1.68-.93 2.25z"/></svg>
<svg style="left:1069.30px;top:24.60px;width:30.30px;height:30.30px;" viewBox="0 0 24 24"><path fill="#fff" d="M19 6.41L17.59 5 12 10.59 6.41 5 5 6.41 10.59 12 5 17.59 6.41 19 12 13.41 17.59 19 19 17.59 13.41 12z"/></svg>
</div>
<div class="a" style="left:436px;top:706.3px;width:1042.7px;height:74.1px;border:3px solid #fcc340;border-radius:9px;box-shadow:0 0 4px rgba(252,195,64,0.6)"></div>
<div class="a" style="left:1430.5px;top:906px;width:85px;height:50px;border:3px solid #fcc340;border-radius:8px;box-shadow:0 0 4px rgba(252,195,64,0.6)"></div>
<svg style="left:1470px;top:725px;width:70px;height:20px" viewBox="0 0 70 20"><path d="M0.7 8.3H62" stroke="#fcc340" stroke-width="3" stroke-dasharray="20 6"/><circle cx="7.7" cy="8.3" r="4.8" fill="#fcc340"/></svg>
<svg style="left:1506px;top:922px;width:70px;height:20px" viewBox="0 0 70 20"><path d="M0.6 10H62" stroke="#fcc340" stroke-width="3" stroke-dasharray="20 6"/><circle cx="7.6" cy="10" r="4.8" fill="#fcc340"/></svg>
<div class="a" style="left:1532px;top:691px;width:300px;height:75.7px;border:3px solid #fcc340;border-radius:9px;background:#fdf0e1"></div>
<div class="t " style="left:1539.00px;top:697.94px;font-size:27.6px;color:#000;font-weight:400;;transform:scaleX(1.0193);transform-origin:0 0;">Clear the "Card border</div>
<div class="t " style="left:1540.80px;top:731.64px;font-size:27.6px;color:#000;font-weight:400;;">radius" value</div>
<div class="a" style="left:1553.3px;top:659.2px;width:29.5px;height:34.5px;border:3px solid #fcc340;border-radius:9px;background:#fff"></div>
<div class="t " style="left:1560.50px;top:663.99px;font-size:26px;color:#000;font-weight:400;;">7</div>
<div class="a" style="left:1568px;top:912.5px;width:156.5px;height:41px;border:3px solid #fcc340;border-radius:9px;background:#fdf0e1"></div>
<div class="t " style="left:1575.20px;top:918.84px;font-size:27.6px;color:#000;font-weight:400;;transform:scaleX(1.0137);transform-origin:0 0;">Click "Add"</div>
<div class="a" style="left:1586.5px;top:879.8px;width:29.5px;height:35px;border:3px solid #fcc340;border-radius:9px;background:#fff"></div>
<div class="t " style="left:1593.50px;top:884.79px;font-size:26px;color:#000;font-weight:400;;">8</div>
</body></html>
